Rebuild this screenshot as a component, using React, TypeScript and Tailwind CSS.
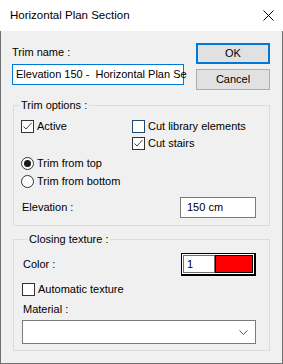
import type { ReactNode } from 'react'

const Check = ({ checked, blue }: { checked?: boolean; blue?: boolean }) => (
  <span
    className={`flex h-[13px] w-[13px] shrink-0 items-center justify-center border bg-white ${
      blue ? 'border-[#1c4a73]' : 'border-[#333333]'
    }`}
  >
    {checked && (
      <svg width="11" height="11" viewBox="0 0 11 11">
        <polyline
          points="1.5,5.5 4,8 9.5,2"
          fill="none"
          stroke="#444444"
          strokeWidth="1"
        />
      </svg>
    )}
  </span>
)

const Radio = ({ checked }: { checked?: boolean }) => (
  <span className="flex h-[13px] w-[13px] shrink-0 items-center justify-center rounded-full border border-[#333333] bg-white">
    {checked && <span className="h-[7px] w-[7px] rounded-full bg-[#1a1a1a]" />}
  </span>
)

const Option = ({ control, label }: { control: ReactNode; label: string }) => (
  <div className="flex h-[13px] items-center gap-[3px] leading-[13px]">
    {control}
    <span>{label}</span>
  </div>
)

const App = () => {
  return (
    <div className="flex h-[364px] w-[283px] flex-col bg-white font-['Liberation_Sans',Arial,sans-serif] text-[11px] text-black">
      <div className="flex h-[31px] shrink-0 items-center justify-between pl-[10px] pr-[9px]">
        <span className="text-[11.5px]">Horizontal Plan Section</span>
        <svg width="11" height="11" viewBox="0 0 11 11">
          <path d="M0.5 0.5 L10.5 10.5 M10.5 0.5 L0.5 10.5" stroke="#000" strokeWidth="1" />
        </svg>
      </div>

      <div className="flex flex-1 flex-col border-x border-b border-[#6f6f6f] bg-[#f0f0f0]">
        <div className="mt-[12px] flex">
          <div className="ml-[11px] flex w-[172px] flex-col pt-[1px]">
            <label className="h-[16px] leading-[16px]">Trim name :</label>
            <div className="mt-[4px] flex h-[21px] items-center whitespace-nowrap border border-[#0078d7] bg-white pl-[4px]">
              <span className="mr-[-1px] h-[13px] w-[1px] bg-black" />
              <span>Elevation 150 -&nbsp; Horizontal Plan Se</span>
            </div>
          </div>
          <div className="ml-auto mr-[12px] flex w-[74px] flex-col gap-[5px]">
            <button className="h-[21px] border-2 border-[#0078d7] bg-[#e1e1e1] leading-none">
              OK
            </button>
            <button className="h-[21px] border border-[#adadad] bg-[#e1e1e1] leading-none">
              Cancel
            </button>
          </div>
        </div>

        <fieldset className="ml-[12px] mr-[12px] mt-[7px] border border-[#dcdcdc] pb-[7px] pr-[13px]">
          <legend className="ml-[5px] px-[2px] leading-[16px]">Trim options :</legend>
          <div className="mt-[7px] flex pl-[7px]">
            <div className="w-[111px]">
              <Option control={<Check checked />} label="Active" />
            </div>
            <div className="flex flex-col gap-[4px]">
              <Option control={<Check blue />} label="Cut library elements" />
              <Option control={<Check checked />} label="Cut stairs" />
            </div>
          </div>
          <div className="mt-[7px] flex flex-col gap-[5px] pl-[7px]">
            <Option control={<Radio checked />} label="Trim from top" />
            <Option control={<Radio />} label="Trim from bottom" />
          </div>
          <div className="mt-[9px] flex items-center justify-between pl-[8px]">
            <span>Elevation :</span>
            <div className="flex h-[21px] w-[76px] items-center border border-[#7a7a7a] bg-white pl-[6px]">
              150 cm
            </div>
          </div>
        </fieldset>

        <fieldset className="ml-[12px] mr-[12px] mt-[5px] border border-[#dcdcdc] pb-[6px] pl-[8px] pr-[13px]">
          <legend className="ml-[5px] px-[2px] leading-[16px]">Closing texture :</legend>
          <div className="mt-[6px] flex items-center justify-between">
            <span className="pl-[1px]">Color :</span>
            <div className="flex h-[23px] w-[75px] border border-b-2 border-r-2 border-black bg-white p-[1px]">
              <div className="flex w-[32px] items-center border border-[#6f6f6f] bg-white pl-[3px]">1</div>
              <div className="flex-1 border border-black bg-[#ff0000]" />
            </div>
          </div>
          <div className="mt-[7px]">
            <Option control={<Check />} label="Automatic texture" />
          </div>
          <div className="mt-[5px] h-[16px] pl-[1px] leading-[16px]">Material :</div>
          <div className="mt-[3px] flex h-[24px] items-center justify-end border border-[#7a7a7a] bg-white pr-[7px]">
            <svg width="9" height="5" viewBox="0 0 9 5">
              <polyline points="0.5,0.5 4.5,4.5 8.5,0.5" fill="none" stroke="#555" strokeWidth="1" />
            </svg>
          </div>
        </fieldset>
      </div>
    </div>
  )
}

export default App
